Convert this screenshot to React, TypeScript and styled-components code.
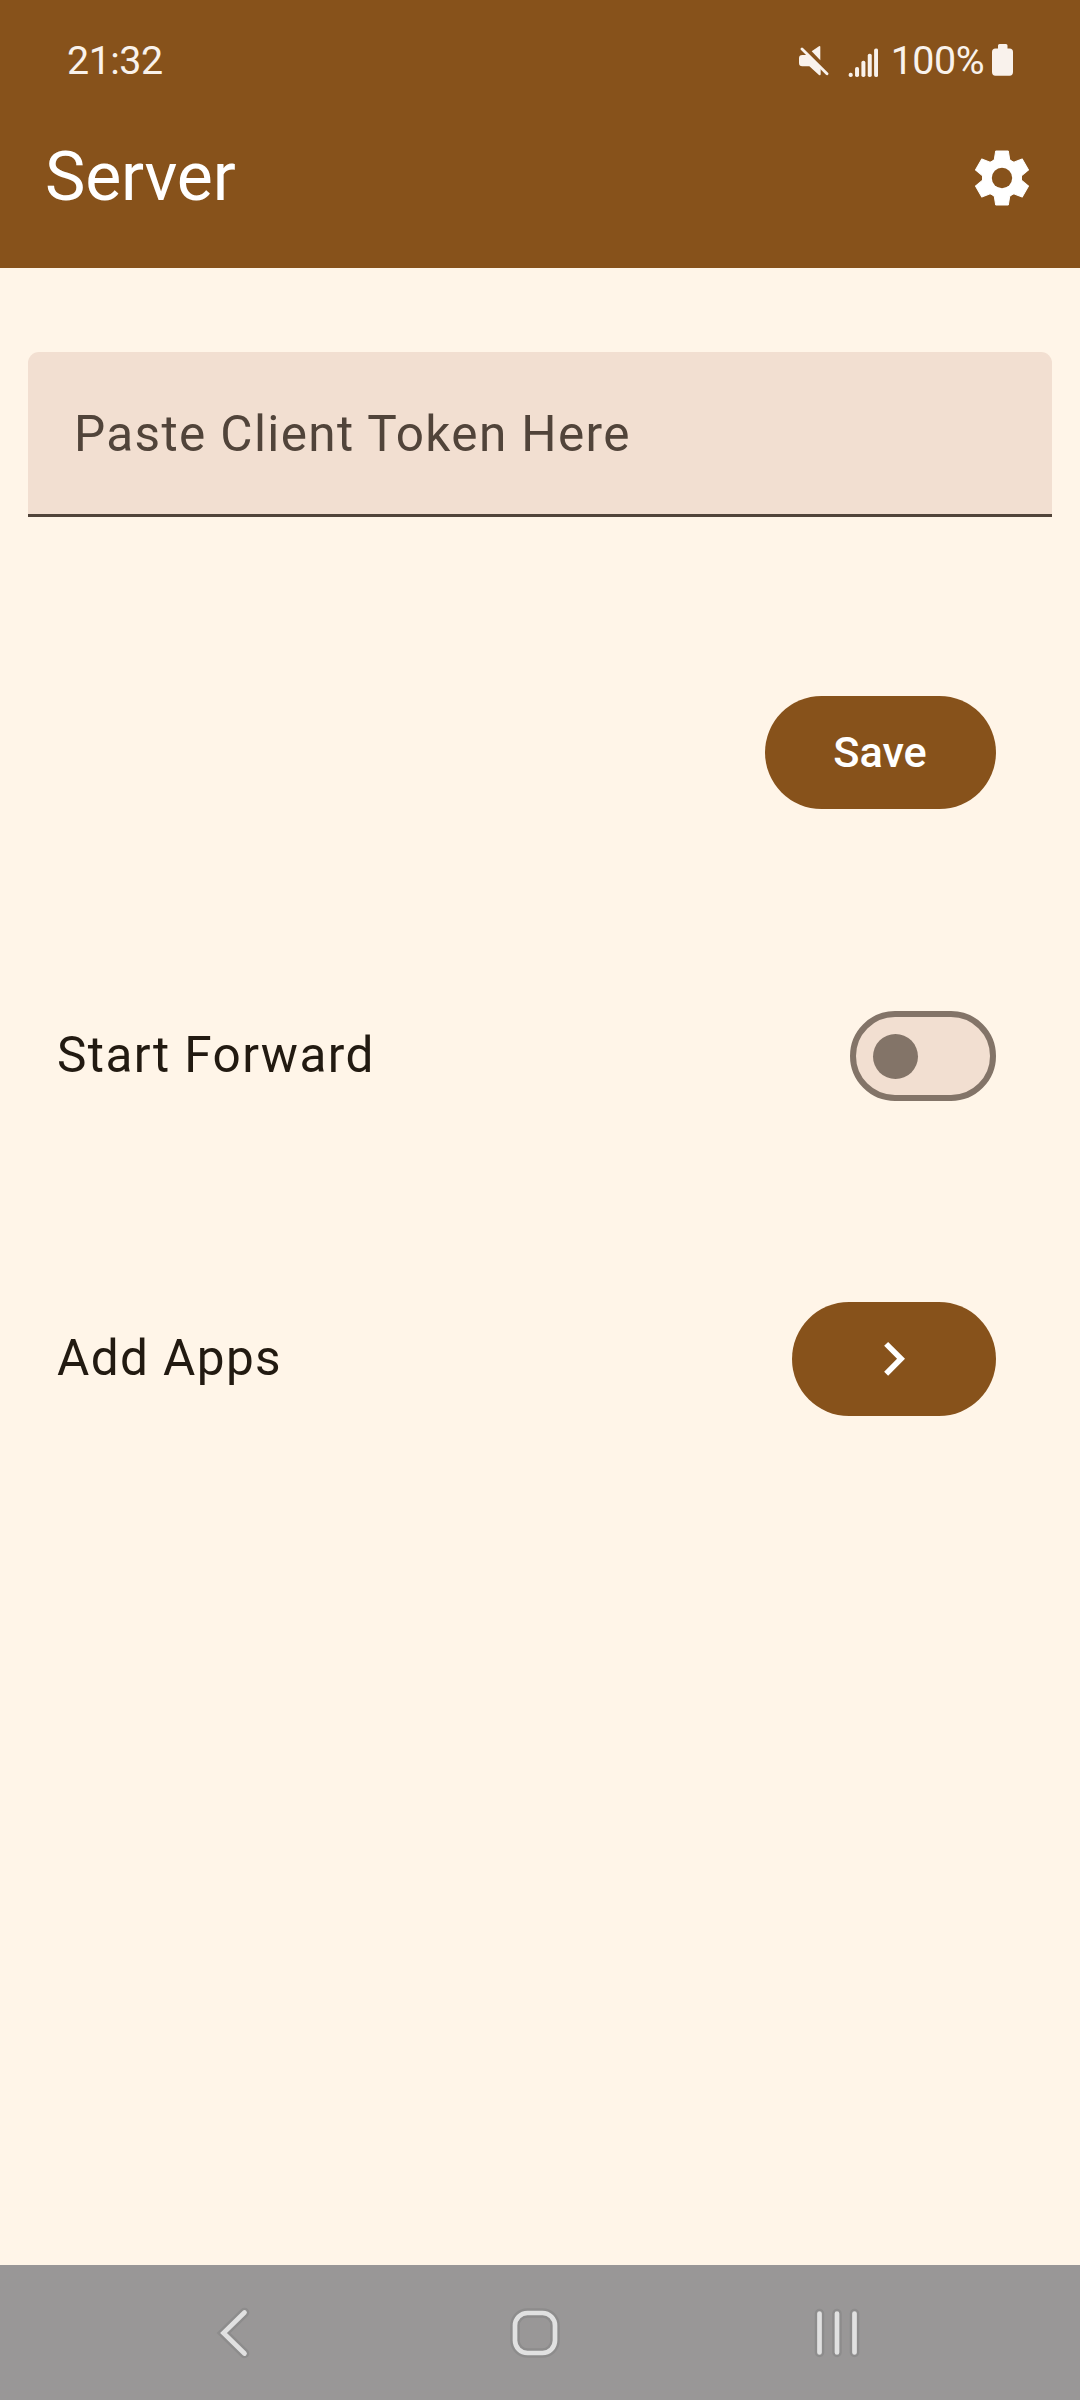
import React, { useState } from "react";
import styled, { createGlobalStyle } from "styled-components";

const color = {
  primary: "#87521b",
  onPrimary: "#ffffff",
  surface: "#fff5e8",
  variant: "#f2dfd1",
  onVariant: "#51443a",
  outline: "#837468",
  text: "#221a11",
  status: "#f9f2ec",
  nav: "#999797",
  navIcon: "#e1e1e1",
  navHalo: "#8d8c8c",
};

const GlobalStyle = createGlobalStyle`
  * { box-sizing: border-box; }
  body { margin: 0; background: ${color.surface}; font-family: Roboto, "Noto Sans", sans-serif; }
  svg { display: block; flex: none; }
`;

const Screen = styled.div`
  width: 1080px;
  height: 2400px;
  display: flex;
  flex-direction: column;
  overflow: hidden;
  background: ${color.surface};
`;

const Header = styled.header`
  height: 268px;
  flex: none;
  background: ${color.primary};
  color: ${color.onPrimary};
`;

const StatusBar = styled.div`
  height: 88px;
  padding: 33px 66px 0 67px;
  display: flex;
  justify-content: space-between;
  align-items: flex-start;
  color: ${color.status};
  font-size: 39.4px;
  line-height: 55px;
  letter-spacing: -0.5px;
`;

const StatusIcons = styled.div`
  display: flex;
  align-items: flex-start;
`;

const StatusText = styled.span<{ $shift?: number }>`
  white-space: nowrap;
  margin-left: ${(p) => p.$shift ?? 0}px;
`;

const AppBar = styled.div`
  height: 180px;
  padding: 0 51px 0 45px;
  display: flex;
  align-items: center;
  justify-content: space-between;
`;

const Title = styled.h1`
  margin: 0;
  padding-bottom: 2px;
  font-size: 68px;
  font-weight: 400;
  line-height: 80px;
  letter-spacing: -0.2px;
`;

const IconButton = styled.button`
  border: 0;
  padding: 0;
  background: none;
  color: inherit;
`;

const Content = styled.main`
  flex: 1;
  display: flex;
  flex-direction: column;
  padding: 84px 28px 0;
`;

const TokenField = styled.input`
  width: 100%;
  height: 165px;
  padding: 2px 46px 0;
  border: 0;
  border-bottom: 3px solid ${color.onVariant};
  border-radius: 11px 11px 0 0;
  outline: 0;
  background: ${color.variant};
  color: ${color.text};
  font: 400 49.5px Roboto, sans-serif;
  letter-spacing: 1.36px;
  &::placeholder {
    color: ${color.onVariant};
    opacity: 1;
  }
`;

const Row = styled.div<{ $top: number; $height: number }>`
  display: flex;
  align-items: center;
  justify-content: space-between;
  height: ${(p) => p.$height}px;
  margin-top: ${(p) => p.$top}px;
  padding: 0 56px 0 29px;
`;

const Label = styled.span`
  color: ${color.text};
  font-size: 49.5px;
  line-height: 68px;
  letter-spacing: 1.4px;
  padding-bottom: 3px;
`;

const Pill = styled.button<{ $width: number }>`
  width: ${(p) => p.$width}px;
  height: 100%;
  margin-left: auto;
  padding: 0;
  border: 0;
  border-radius: 57px;
  display: flex;
  align-items: center;
  justify-content: center;
  background: ${color.primary};
  color: ${color.onPrimary};
  font: 500 43.3px Roboto, sans-serif;
  letter-spacing: 0;
`;

const PillText = styled.span`
  padding-right: 1px;
`;

const Track = styled.button<{ $on: boolean }>`
  width: 146px;
  height: 90px;
  padding: 0 17px;
  border: 6px solid ${color.outline};
  border-radius: 45px;
  display: flex;
  align-items: center;
  justify-content: ${(p) => (p.$on ? "flex-end" : "flex-start")};
  background: ${color.variant};
`;

const Thumb = styled.span`
  width: 45px;
  height: 45px;
  border-radius: 50%;
  background: ${color.outline};
`;

const NavBar = styled.nav`
  height: 135px;
  flex: none;
  display: flex;
  justify-content: center;
  padding: 38px 5px 0 0;
  gap: 242px;
  background: ${color.nav};
`;

const MuteGlyph = styled.svg`
  margin-top: 12px;
`;

const SignalGlyph = styled.svg`
  margin: 15px 0 0 19px;
`;

const BatteryGlyph = styled.svg`
  margin: 11px 0 0 8px;
`;

const MuteIcon = () => (
  <MuteGlyph width="30" height="31" viewBox="57 75 90 93" fill="currentColor">
    <path d="M95 94L117 79q4-2 4 2v40z" />
    <path d="M67 105h20l35 36v21q0 6-5 3L88 139H67q-10 0-10-10v-14q0-10 10-10z" />
    <path d="M66 87L141 161" stroke="currentColor" strokeWidth="8.500" strokeLinecap="round" />
  </MuteGlyph>
);

const SignalIcon = () => (
  <SignalGlyph width="30" height="30" viewBox="848 48 30 30" fill="currentColor">
    {[72.7, 67, 60.7, 53.8, 48.5].map((top, i) => (
      <rect key={top} x={848.7 + i * 6.35} y={top} width="4" height={77.1 - top} rx="1.800" />
    ))}
  </SignalGlyph>
);

const BatteryIcon = () => (
  <BatteryGlyph width="22" height="32" viewBox="992 44 22 32" fill="currentColor">
    <path d="M999.500 44h6.500q1.500 0 1.500 1.500v3h2q3.500 0 3.500 3.500v20q0 3.700-3.500 3.700h-14q-3.500 0-3.500-3.700v-20q0-3.500 3.500-3.500h2.500v-3q0-1.500 1.500-1.500z" />
  </BatteryGlyph>
);

const GearIcon = () => (
  <svg width="54" height="56" viewBox="-81 -84 162 168" fill="none">
    <g fill="currentColor" stroke="currentColor" strokeWidth="3" strokeLinejoin="round">
      {[0, 60, 120, 180, 240, 300].map((angle) => (
        <path key={angle} transform={`rotate(${angle})`} d="M-19-81H19L23.500-52.500L35-47.500L0-20L-35-47.500L-23.500-52.500z" />
      ))}
      <circle r="50" />
    </g>
    <circle r="30.500" fill={color.primary} />
  </svg>
);

const ChevronIcon = () => (
  <svg width="67.500" height="67.500" viewBox="0 0 24 24" fill="currentColor">
    <path d="M8.590 16.590L13.170 12 8.590 7.410 10 6l6 6-6 6z" />
  </svg>
);

const NavIcon = ({ children }: { children: React.ReactNode }) => (
  <svg width="60" height="60" viewBox="3 0 60 60" fill="none" strokeLinecap="round">
    <g stroke={color.navHalo} strokeWidth="9.500">{children}</g>
    <g stroke={color.navIcon} strokeWidth="4.700">{children}</g>
  </svg>
);

export default function App() {
  const [forwarding, setForwarding] = useState(false);
  return (
    <Screen>
      <GlobalStyle />
      <Header>
        <StatusBar>
          <StatusText>21:32</StatusText>
          <StatusIcons>
            <MuteIcon />
            <SignalIcon />
            <StatusText $shift={13}>100%</StatusText>
            <BatteryIcon />
          </StatusIcons>
        </StatusBar>
        <AppBar>
          <Title>Server</Title>
          <IconButton aria-label="Settings">
            <GearIcon />
          </IconButton>
        </AppBar>
      </Header>
      <Content>
        <TokenField placeholder="Paste Client Token Here" />
        <Row $top={179} $height={113}>
          <Pill $width={231}>
            <PillText>Save</PillText>
          </Pill>
        </Row>
        <Row $top={202} $height={90}>
          <Label>Start Forward</Label>
          <Track
            role="switch"
            aria-checked={forwarding}
            aria-label="Start Forward"
            $on={forwarding}
            onClick={() => setForwarding(!forwarding)}
          >
            <Thumb />
          </Track>
        </Row>
        <Row $top={201} $height={114}>
          <Label>Add Apps</Label>
          <Pill $width={204} aria-label="Add Apps">
            <ChevronIcon />
          </Pill>
        </Row>
      </Content>
      <NavBar>
        <NavIcon>
          <path d="M41.500 9.500L20.500 30l21 20.500" />
        </NavIcon>
        <NavIcon>
          <rect x="10" y="10" width="40" height="40" rx="12.500" />
        </NavIcon>
        <NavIcon>
          <path d="M12.500 10.500v39M30 10.500v39M47.500 10.500v39" />
        </NavIcon>
      </NavBar>
    </Screen>
  );
}
